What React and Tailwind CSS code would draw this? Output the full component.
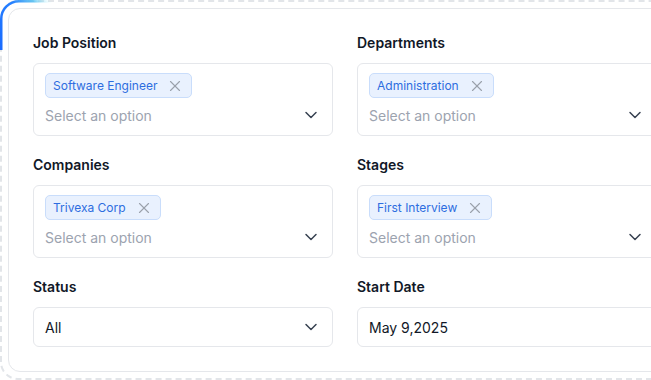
import React from 'react';
import { ChevronDown, X } from 'lucide-react';

const Tag = ({ label }) => (
  <span className="inline-flex items-center h-[25px] pl-[7px] pr-[7px] gap-[9px] rounded-[5px] bg-[#e9f1fe] border border-[#c9ddfb] text-[12px] text-[#2d6de0]">
    {label}
    <X size={18} strokeWidth={1.5} className="text-[#9aa1ab]" />
  </span>
);

const MultiSelect = ({ label, tag }) => (
  <div>
    <p className="text-[14px] leading-5 font-semibold text-[#111827] mb-[10px]">{label}</p>
    <div className="border border-[#e5e7eb] rounded-[6px] px-[11px] pt-[9px] pb-[10px] bg-white">
      <div className="flex">
        <Tag label={tag} />
      </div>
      <div className="flex items-center justify-between mt-[7px] h-5">
        <span className="text-[14px] text-[#9ca3af]">Select an option</span>
        <ChevronDown size={20} strokeWidth={1.8} className="text-[#374151]" />
      </div>
    </div>
  </div>
);

const SingleField = ({ label, value, chevron }) => (
  <div>
    <p className="text-[14px] leading-5 font-semibold text-[#111827] mb-[10px]">{label}</p>
    <div className="h-10 border border-[#e5e7eb] rounded-[6px] px-[11px] flex items-center justify-between bg-white">
      <span className="text-[14px] text-[#111827]">{value}</span>
      {chevron && <ChevronDown size={20} strokeWidth={1.8} className="text-[#374151]" />}
    </div>
  </div>
);

export default function App() {
  return (
    <div className="w-[651px] h-[380px] overflow-hidden bg-white" style={{ fontFamily: 'Inter, "Noto Sans", sans-serif' }}>
      <div className="relative w-[700px] h-[380px] border-2 border-dashed border-[#e2e5e9] rounded-[18px] p-[6px]">
        {/* corner accent */}
        <svg className="absolute -left-[2px] -top-[2px]" width="60" height="60" viewBox="0 0 60 60" fill="none">
          <defs>
            <linearGradient id="acc" x1="0" y1="50" x2="50" y2="0" gradientUnits="userSpaceOnUse">
              <stop offset="0" stopColor="#1a6bff" />
              <stop offset="0.6" stopColor="#2680ff" />
              <stop offset="0.82" stopColor="#52bff2" stopOpacity="0.85" />
              <stop offset="1" stopColor="#a5f3fc" stopOpacity="0" />
            </linearGradient>
          </defs>
          <path d="M1.25 50 V19 A17.75 17.75 0 0 1 19 1.25 H52" stroke="url(#acc)" strokeWidth="2.5" />
        </svg>
        <div className="w-[682px] border border-[#e5e7eb] rounded-[12px] bg-white pt-6 pb-6 pl-6 pr-6">
          <div className="grid grid-cols-[300px_300px] gap-x-6 gap-y-[19px]">
            <MultiSelect label="Job Position" tag="Software Engineer" />
            <MultiSelect label="Departments" tag="Administration" />
            <MultiSelect label="Companies" tag="Trivexa Corp" />
            <MultiSelect label="Stages" tag="First Interview" />
            <SingleField label="Status" value="All" chevron />
            <SingleField label="Start Date" value="May 9,2025" />
          </div>
        </div>
      </div>
    </div>
  );
}
